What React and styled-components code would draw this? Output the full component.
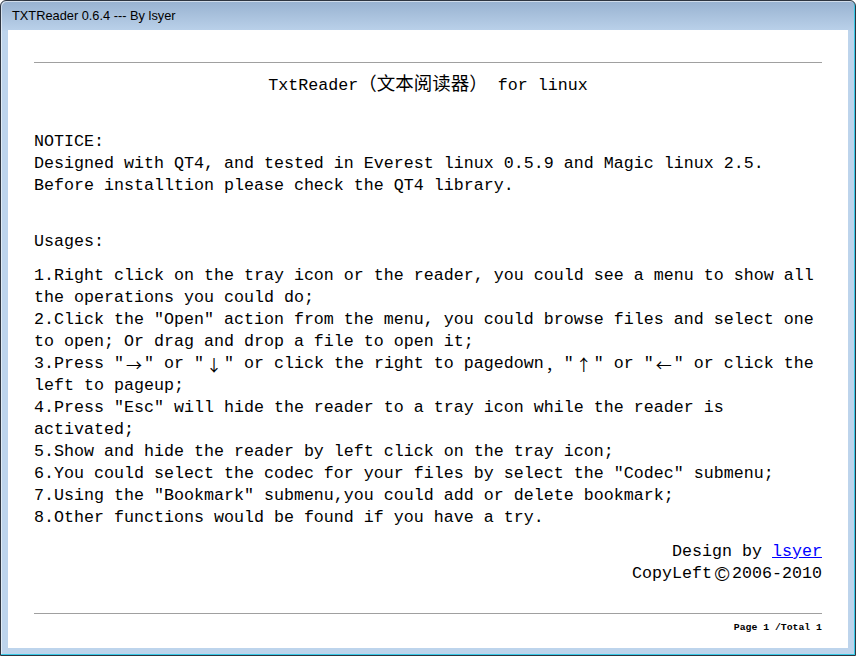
import React from "react"
import styled, { createGlobalStyle } from "styled-components"

const GlobalStyle = createGlobalStyle`
  html, body {
    margin: 0;
    padding: 0;
    background: #ffffff;
  }
`

const Window = styled.div`
  box-sizing: border-box;
  width: 856px;
  height: 656px;
  display: flex;
  flex-direction: column;
  border: 1px solid #2e3540;
  border-radius: 6px 6px 0 0;
  background: linear-gradient(#98b2d0 0px, #b9d0e9 29px, #bdd4ec 30px, #bdd4ec 100%);
  box-shadow: inset -1px -1px 0 #38c9e6, inset 1px 1px 0 rgba(255, 255, 255, 0.55);
  padding: 0 7px 7px 7px;
  overflow: hidden;
`

const TitleBar = styled.div`
  height: 29px;
  flex: none;
  display: flex;
  align-items: center;
  padding-left: 4px;
  font-family: "Liberation Sans", Arial, sans-serif;
  font-size: 12.8px;
  color: #000;
`

const Client = styled.div`
  flex: 1;
  background: #fff;
  padding: 32px 26px 0 26px;
  font-family: "Liberation Mono", "Noto Sans CJK SC", monospace;
  font-size: 16.66px;
  line-height: 22px;
  color: #000;
`

const Rule = styled.div`
  height: 1px;
  background: #a0a0a0;
  margin-top: ${(p) => p.$top || 0}px;
`

const Block = styled.div`
  margin-top: ${(p) => p.$top}px;
  text-align: ${(p) => p.$align || "left"};
`

const Line = styled.div`
  white-space: nowrap;
`

const Wide = styled.span`
  display: inline-block;
  width: 20px;
  height: 22px;
  vertical-align: top;
  text-align: center;
  font-family: ${(p) => p.$font || `"Noto Sans CJK SC", sans-serif`};
  font-size: ${(p) => p.$size || 16}px;
  line-height: 22px;
`

const CJK = styled.span`
  font-family: "Noto Sans CJK SC", sans-serif;
  font-size: 18.5px;
  line-height: 1;
`

const Link = styled.a`
  color: #0000ff;
  text-decoration: underline;
`

const PageInfo = styled.div`
  margin-top: 7px;
  text-align: right;
  font-family: "Liberation Mono", monospace;
  font-size: 9.8px;
  font-weight: bold;
  line-height: 14px;
`

const usages = [
  "1.Right click on the tray icon or the reader, you could see a menu to show all the operations you could do;",
  "2.Click the \"Open\" action from the menu, you could browse files and select one to open; Or drag and drop a file to open it;",
  null,
  "4.Press \"Esc\" will hide the reader to a tray icon while the reader is activated;",
  "5.Show and hide the reader by left click on the tray icon;",
  "6.You could select the codec for your files by select the \"Codec\" submenu;",
  "7.Using the \"Bookmark\" submenu,you could add or delete bookmark;",
  "8.Other functions would be found if you have a try.",
]

export default function App() {
  return (
    <>
      <GlobalStyle />
      <Window>
        <TitleBar>TXTReader 0.6.4 --- By lsyer</TitleBar>
        <Client>
          <Rule />
          <Block $top={10} $align="center">
            TxtReader<CJK>（文本阅读器）</CJK> for linux
          </Block>
          <Block $top={34}>
            <Line>NOTICE:</Line>
            <Line>Designed with QT4, and tested in Everest linux 0.5.9 and Magic linux 2.5.</Line>
            <Line>Before installtion please check the QT4 library.</Line>
          </Block>
          <Block $top={34}>Usages:</Block>
          <Block $top={12}>
            {usages.map((u, i) =>
              u ? (
                <div key={i}>{u}</div>
              ) : (
                <div key={i}>
                  <Line>
                    3.Press "<Wide>→</Wide>" or "<Wide>↓</Wide>" or click the right to pagedown<Wide>，</Wide>"<Wide>↑</Wide>" or "<Wide>←</Wide>" or click the
                  </Line>
                  <Line>left to pageup;</Line>
                </div>
              )
            )}
          </Block>
          <Block $top={12} $align="right">
            <Line>
              Design by <Link href="#">lsyer</Link>
            </Line>
            <Line>
              CopyLeft<Wide $size={20} $font={`"Liberation Sans", sans-serif`}>©</Wide>2006-2010
            </Line>
          </Block>
          <Rule $top={28} />
          <PageInfo>Page 1 /Total 1</PageInfo>
        </Client>
      </Window>
    </>
  )
}
